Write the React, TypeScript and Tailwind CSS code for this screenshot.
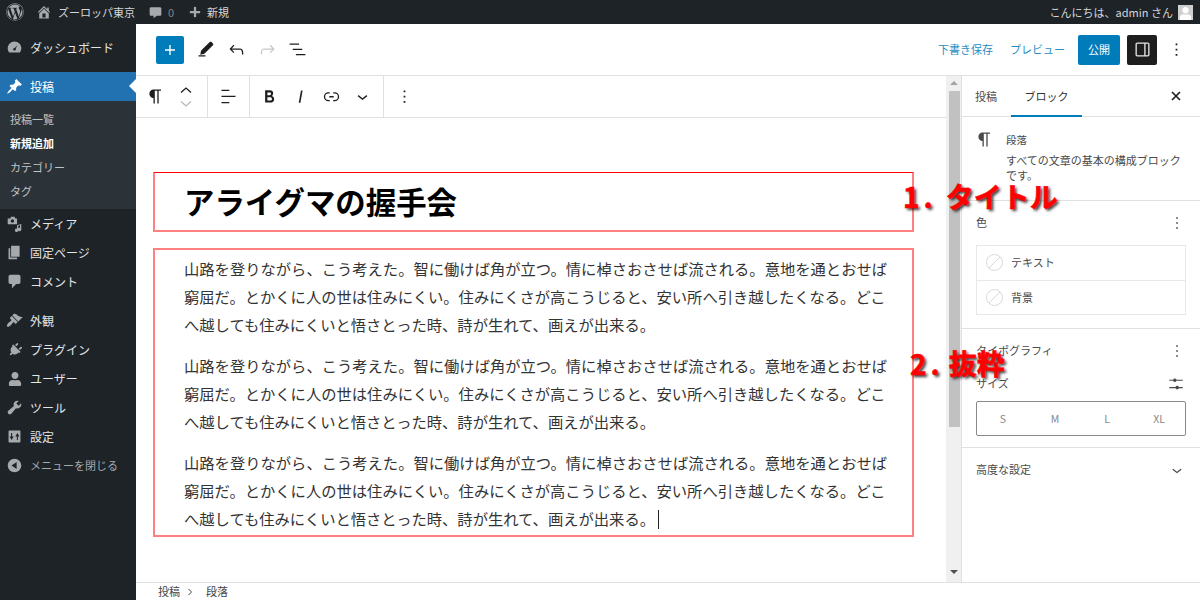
import React from "react";
import { FaWordpress, FaPlus, FaPlug, FaUser } from "react-icons/fa";

const G = ({ d, size = 24, className = "" }: { d: string; size?: number; className?: string }) => (
  <svg viewBox="0 0 24 24" width={size} height={size} fill="currentColor" className={className}>
    <path d={d} />
  </svg>
);
const D = ({ d, children, size = 17 }: { d?: string; children?: React.ReactNode; size?: number }) => (
  <svg viewBox="0 0 20 20" width={size} height={size} fill="currentColor">
    {d && <path d={d} />}
    {children}
  </svg>
);

const ic = {
  plus: "M18 11.2h-5.2V6h-1.6v5.2H6v1.6h5.2V18h1.6v-5.2H18z",
  pencil: "M4 20h8v-1.5H4zm14.9-16.5c-.6-.6-1.5-.6-2.1 0L7.6 12.7c-.7.7-1 1.6-1.1 2.6l-.5 2.7 2.7-.5c1-.1 1.9-.5 2.6-1.1l9.2-9.2c.6-.6.6-1.5 0-2.1z",
  undo: "M18.3 11.7c-.6-.6-1.4-.9-2.3-.9H6.7l2.9-3.3-1.1-1-4.5 5L8.5 16l1-1-2.7-2.7H16c.5 0 .9.2 1.3.5 1 1 1 3.4 1 4.5v.3h1.5v-.2c0-1.5 0-4.3-1.5-5.7z",
  redo: "M15.6 6.5l-1.1 1 2.9 3.3H8c-.9 0-1.7.3-2.3.9-1.4 1.5-1.4 4.2-1.4 5.6v.2h1.5v-.3c0-1.1 0-3.5 1-4.5.3-.3.7-.5 1.3-.5h9.2L14.5 15l1.1 1.1 4.6-4.6-4.6-5z",
  list: "M13.8 5.2H3v1.5h10.8V5.2zm-3.6 12v1.5H21v-1.5H10.2zm7.2-6H6.6v1.5h10.8v-1.5z",
  para: "M18.3 4H9.9v-.1l-.9.2c-2.3.4-4 2.4-4 4.8s1.7 4.4 4 4.8l.7.1V20h1.5V5.5h2.9V20h1.5V5.5h2.7V4z",
  align: "M4 19.8h8.9v-1.5H4v1.5zm8.9-15.6H4v1.5h8.9V4.2zm-8.9 7v1.5h16v-1.5H4z",
  bold: "M14.7 11.3c1-.6 1.5-1.6 1.5-3 0-2.3-1.3-3.4-4-3.4H7v14h5.8c1.4 0 2.5-.3 3.3-1 .8-.7 1.2-1.7 1.2-2.9.1-1.9-.8-3.1-2.6-3.7zm-5.1-4h2.3c.6 0 1.1.1 1.4.4.3.3.5.7.5 1.2s-.2 1-.5 1.2c-.3.3-.8.4-1.4.4H9.6V7.3zm4.6 9c-.4.3-1 .4-1.7.4H9.6v-3.9h2.9c.7 0 1.3.2 1.7.5.4.3.6.8.6 1.5s-.2 1.2-.6 1.5z",
  italic: "M12.5 5L10 19h1.9l2.5-14z",
  link: "M10 17.389H8.444A5.194 5.194 0 1 1 8.444 7H10v1.5H8.444a3.694 3.694 0 0 0 0 7.389H10v1.5ZM14 7h1.556a5.194 5.194 0 0 1 0 10.39H14v-1.5h1.556a3.694 3.694 0 0 0 0-7.39H14V7Zm-4.5 6h5v-1.5h-5V13Z",
  chevDown: "M17.5 11.6L12 16l-5.5-4.4.9-1.2L12 14l4.5-3.6 1 1.2z",
  dots: "M13 19h-2v-2h2v2zm0-6h-2v-2h2v2zm0-6h-2V5h2v2z",
  sidebar: "M18 4H6c-1.1 0-2 .9-2 2v12c0 1.1.9 2 2 2h12c1.1 0 2-.9 2-2V6c0-1.1-.9-2-2-2zM5.5 18V6c0-.3.2-.5.5-.5h8v13H6c-.3 0-.5-.2-.5-.5zm13 0c0 .3-.2.5-.5.5h-2.500v-13H18c.3 0 .5.2.5.5v12z",
  sliders: "M3 6.2h5.2a2.3 2.3 0 0 1 4.4 0H21v1.5h-8.4a2.3 2.3 0 0 1-4.4 0H3zm0 9.8h8.4a2.3 2.3 0 0 1 4.4 0H21v1.5h-5.2a2.3 2.3 0 0 1-4.4 0H3z",
};

const menuA = [
  { label: "メディア", icon: <D><path d="M2 4h3l1-2h4l1 2h2v7H2z" /><circle cx="7.5" cy="7" r="2" fill="#1d2327" /><path d="M13 12l5-1.500V17a2 2 0 1 1-1.500-1.900v-3.200L14.500 12.600V18a2 2 0 1 1-1.500-1.900z" /></D> },
  { label: "固定ページ", icon: <D d="M6 15V2h10v13H6zm-1 1h8v2H3V5h2v11z" /> },
  { label: "コメント", icon: <D d="M5 2h10c1.100 0 2 .9 2 2v7c0 1.100-.9 2-2 2h-3l-5 5v-5H5c-1.100 0-2-.9-2-2V4c0-1.100.9-2 2-2z" /> },
];
const menuB = [
  { label: "外観", icon: <D d="M14.480 11.060L7.410 3.990l1.500-1.500c.5-.56 2.300-.47 3.510.32 1.210.8 1.430 1.280 2.910 2.100 1.180.64 2.450 1.260 4.450.85zm-.71.71L6.700 4.700 4.930 6.470c-.39.39-.39 1.020 0 1.410l1.060 1.060c.39.39.39 1.030 0 1.420-.6.6-1.430 1.110-2.210 1.690-.35.26-.7.53-1.010.84C1.430 14.230.4 16.080 1.400 17.070c.99 1 2.840-.03 4.180-1.360.31-.31.58-.66.84-1.010.58-.78 1.090-1.610 1.690-2.210.39-.39 1.030-.39 1.420 0l1.060 1.060c.39.39 1.020.39 1.410 0z" /> },
  { label: "プラグイン", icon: <FaPlug size={14} className="rotate-45" /> },
  { label: "ユーザー", icon: <FaUser size={14} /> },
  { label: "ツール", icon: <D d="M16.680 9.770c-1.340 1.340-3.300 1.670-4.950.99l-5.410 6.520c-.99.99-2.590.99-3.570 0-.99-.98-.99-2.580 0-3.570l6.520-5.420c-.68-1.650-.35-3.610.99-4.950 1.280-1.280 3.120-1.620 4.720-1.060l-2.890 2.890 2.820 2.820 2.860-2.870c.53 1.580.18 3.390-1.090 4.650z" /> },
  { label: "設定", icon: <D><rect x="3" y="3" width="14" height="14" rx="1" /><path d="M6 6h1.200v4H9l-2.400 4-2.400-4H6zM12.800 14h1.200v-4h1.800l-2.400-4-2.400 4h1.800z" fill="#1d2327" /></D> },
];

const MenuRow = ({ label, icon }: { label: string; icon: React.ReactNode }) => (
  <div className="flex h-[29px] items-center text-[12px] text-[#e4e5e6]">
    <span className="flex w-[30px] shrink-0 justify-center pr-[1px] text-[#a7aaad]">{icon}</span>
    <span>{label}</span>
  </div>
);

const body = (
  <>
    山路を登りながら、こう考えた。智に働けば角が立つ。情に棹さおさせば流される。意地を通とおせば<br />
    窮屈だ。とかくに人の世は住みにくい。住みにくさが高こうじると、安い所へ引き越したくなる。どこ<br />
    へ越しても住みにくいと悟さとった時、詩が生れて、画えが出来る。
  </>
);

const ToolBtn = ({ d, className = "" }: { d: string; className?: string }) => (
  <span className={`flex w-[31px] justify-center ${className}`}><G d={d} size={21} /></span>
);

const NoColor = () => (
  <svg width="17" height="17" viewBox="0 0 17 17" className="shrink-0">
    <circle cx="8.5" cy="8.5" r="8" fill="none" stroke="#d8d8d8" />
    <path d="M3 14L14 3" stroke="#d8d8d8" />
  </svg>
);

export default function App() {
  return (
    <div className="relative flex h-[600px] w-[1200px] flex-col overflow-hidden bg-white font-['Noto_Sans_CJK_JP','Noto_Sans',sans-serif] text-[#1e1e1e]">
      {/* admin bar */}
      <div className="flex h-[24px] shrink-0 items-center bg-[#1d2327] text-[11px] text-[#d5d6d7]">
        <span className="ml-[6px] text-[#a7aaad]"><FaWordpress size={18} /></span>
        <span className="ml-[12px] text-[#a7aaad]"><D size={16} d="M16 8.500l1.530 1.530-1.060 1.060L10 4.620l-6.470 6.470-1.060-1.060L10 2.500l4 4v-2h2v4zm-6-2.460l6 5.990V18H4v-5.970zM12 17v-5H8v5h4z" /></span>
        <span className="ml-[6px]">ズーロッパ東京</span>
        <span className="ml-[14px] text-[#a7aaad]"><svg width="13" height="13" viewBox="0 0 20 20" fill="currentColor"><path d="M3 2h14c1 0 2 1 2 2v9c0 1-1 2-2 2h-5l-5 4v-4H3c-1 0-2-1-2-2V4c0-1 1-2 2-2z" /></svg></span>
        <span className="ml-[6px] text-[#80858a]">0</span>
        <span className="ml-[15px] text-[#a7aaad]"><FaPlus size={12} /></span>
        <span className="ml-[6px]">新規</span>
        <span className="ml-auto">こんにちは、admin さん</span>
        <span className="ml-[5px] mr-[7px] flex h-[15px] w-[15px] items-end justify-center overflow-hidden bg-[#cfcfcf] text-white"><FaUser size={13} /></span>
      </div>

      <div className="flex min-h-0 flex-1">
        {/* sidebar */}
        <div className="w-[136px] shrink-0 bg-[#1d2327]">
          <div className="pb-[10px] pt-[9px]">
            <MenuRow label="ダッシュボード" icon={<D><path d="M3.760 16h12.480c1.100-1.370 1.760-3.110 1.760-5 0-4.420-3.580-8-8-8s-8 3.580-8 8c0 1.890.66 3.630 1.760 5z" /><path d="M10 11l3.500-4-2.500 5z" fill="#1d2327" /><circle cx="10" cy="12" r="1.500" fill="#1d2327" /></D>} />
          </div>
          <div className="relative flex h-[29px] items-center bg-[#2271b1] text-[12px] text-white">
            <span className="flex w-[30px] shrink-0 justify-center pr-[1px]"><D d="M10.440 3.020l1.820-1.820 6.360 6.350-1.830 1.820c-1.050-.68-2.480-.57-3.410.36l-.75.75c-.92.93-1.040 2.350-.35 3.410l-1.830 1.820-2.410-2.410-2.800 2.790c-.42.42-3.380 2.710-3.800 2.290s1.860-3.390 2.280-3.810l2.790-2.790L4.100 9.360l1.830-1.820c1.050.69 2.480.57 3.400-.36l.75-.75c.93-.92 1.040-2.350.36-3.410z" /></span>
            <span>投稿</span>
            <span className="absolute right-0 top-[7px] h-0 w-0 border-y-[7px] border-r-[7px] border-y-transparent border-r-white" />
          </div>
          <div className="bg-[#2c3338] pb-[6px] pl-[10px] pt-[6px] text-[11px] text-[#c3c4c7]">
            <div className="flex h-[24px] items-center">投稿一覧</div>
            <div className="flex h-[24px] items-center font-bold text-white">新規追加</div>
            <div className="flex h-[24px] items-center">カテゴリー</div>
            <div className="flex h-[24px] items-center">タグ</div>
          </div>
          {menuA.map((m) => <MenuRow key={m.label} {...m} />)}
          <div className="h-[10px]" />
          {menuB.map((m) => <MenuRow key={m.label} {...m} />)}
          <div className="flex h-[29px] items-center text-[11px] text-[#a7aaad]">
            <span className="flex w-[30px] shrink-0 justify-center pr-[1px]"><D><circle cx="10" cy="10" r="8" /><path d="M12.500 6v8L6.500 10z" fill="#1d2327" /></D></span>
            <span>メニューを閉じる</span>
          </div>
        </div>

        {/* main */}
        <div className="flex min-w-0 flex-1 flex-col bg-white">
          {/* header */}
          <div className="flex h-[52px] shrink-0 items-center border-b border-[#e0e0e0]">
            <span className="ml-[20px] flex h-[28px] w-[28px] items-center justify-center rounded-[2px] bg-[#007cba] text-white"><G d={ic.plus} size={20} /></span>
            <span className="ml-[6px] flex items-center text-[#1e1e1e]">
              <ToolBtn d={ic.pencil} />
              <ToolBtn d={ic.undo} />
              <ToolBtn d={ic.redo} className="text-[#c8c8c8]" />
              <span className="-ml-[1px]"><ToolBtn d={ic.list} /></span>
            </span>
            <span className="ml-auto text-[11px] text-[#2a8cc0]">下書き保存</span>
            <span className="ml-[17px] text-[11px] text-[#2a8cc0]">プレビュー</span>
            <span className="ml-[13px] flex h-[30px] w-[42px] items-center justify-center rounded-[2px] bg-[#007cba] text-[11px] text-white">公開</span>
            <span className="ml-[7px] flex h-[30px] w-[30px] items-center justify-center rounded-[2px] bg-[#1e1e1e] text-[#e8e8e8]"><G d={ic.sidebar} size={21} /></span>
            <span className="ml-[8px] mr-[13px] flex w-[22px] justify-center"><G d={ic.dots} size={21} /></span>
          </div>

          <div className="flex min-h-0 flex-1">
            {/* editor */}
            <div className="flex min-w-0 flex-1 flex-col">
              <div className="flex h-[42px] shrink-0 items-center border-b border-[#e0e0e0]">
                <div className="flex h-full w-[72px] items-center border-r border-[#e0e0e0]">
                  <span className="ml-[9px]"><G d={ic.para} size={21} /></span>
                  <span className="ml-[13px] flex flex-col items-center">
                    <svg width="14" height="8" viewBox="0 0 14 8" fill="none" stroke="#1e1e1e" strokeWidth="1.3"><path d="M2 6.500L7 2l5 4.500" /></svg>
                    <svg width="14" height="8" viewBox="0 0 14 8" fill="none" stroke="#b8b8b8" strokeWidth="1.3" className="mt-[6px]"><path d="M2 1.500L7 6l5-4.500" /></svg>
                  </span>
                </div>
                <div className="flex h-full w-[42px] items-center justify-center border-r border-[#e0e0e0]"><G d={ic.align} size={21} /></div>
                <div className="flex h-full w-[134px] items-center border-r border-[#e0e0e0] pl-[4px]">
                  <ToolBtn d={ic.bold} />
                  <ToolBtn d={ic.italic} />
                  <ToolBtn d={ic.link} />
                  <ToolBtn d={ic.chevDown} />
                </div>
                <span className="ml-[10px]"><G d={ic.dots} size={21} /></span>
              </div>

              <div className="min-h-0 flex-1 pl-[17px] pr-[32px] pt-[54px]">
                <div className="flex h-[60px] items-center border-x-2 border-b-2 border-t border-x-[#ff8080] border-b-[#ff8080] border-t-[#ff0000] pl-[29px]">
                  <h1 className="text-[30.400px] font-bold leading-none text-black">アライグマの握手会</h1>
                </div>
                <div className="mt-[16px] h-[289px] border-2 border-[#ff8080] pl-[29px] pt-[4px] text-[15.300px] leading-[28px] text-[#333]">
                  <p className="whitespace-nowrap">{body}</p>
                  <p className="mt-[13px] whitespace-nowrap">{body}</p>
                  <p className="mt-[13px] whitespace-nowrap">
                    {body}
                    <span className="ml-[3px] inline-block h-[19px] w-px bg-[#222] align-[-4px]" />
                  </p>
                </div>
              </div>
            </div>

            {/* scrollbar */}
            <div className="flex w-[15px] shrink-0 flex-col items-center bg-[#f0f0f0] pl-[1px] pt-[5px]">
              <span className="h-0 w-0 border-x-[4px] border-b-[4px] border-x-transparent border-b-[#a3a3a3]" />
              <span className="mt-[6px] h-[336px] w-[11px] bg-[#c1c1c1]" />
              <span className="mt-[143px] h-0 w-0 border-x-[4px] border-t-[4px] border-x-transparent border-t-[#505050]" />
            </div>

            {/* panel */}
            <div className="w-[239px] shrink-0 border-l border-[#e0e0e0] text-[11px] text-[#4a4a4a]">
              <div className="flex h-[41px] items-center border-b border-[#e0e0e0]">
                <span className="ml-[13px]">投稿</span>
                <span className="relative ml-[14px] flex h-full w-[71px] items-center justify-center text-[#333]">
                  ブロック
                  <span className="absolute inset-x-0 bottom-[-1px] h-[2px] bg-[#007cba]" />
                </span>
                <span className="ml-auto mr-[19px]">
                  <svg width="10" height="10" viewBox="0 0 10 10" stroke="#1e1e1e" strokeWidth="1.7"><path d="M1 1l8 8M9 1l-8 8" /></svg>
                </span>
              </div>
              <div className="flex h-[84px] border-b border-[#e0e0e0] pl-[13px] pt-[13px]">
                <span className="-ml-[1px] -mt-[1px] w-[32px] shrink-0"><G d={ic.para} size={21} /></span>
                <div className="leading-[15px]">
                  <div className="mt-[2px] text-[10.500px]">段落</div>
                  <div className="mt-[6px] w-[180px]">すべての文章の基本の構成ブロックです。</div>
                </div>
              </div>
              <div className="h-[128px] border-b border-[#e0e0e0] px-[14px]">
                <div className="flex h-[44px] items-center justify-between">
                  <span className="-mt-[2px]">色</span>
                  <span className="-mr-[1px]"><G d={ic.dots} size={20} /></span>
                </div>
                <div className="border border-[#e8e8e8]">
                  <div className="flex h-[34px] items-center gap-[8px] pl-[9px] pb-[1px]"><NoColor />テキスト</div>
                  <div className="border-t border-[#e8e8e8]" />
                  <div className="flex h-[33px] items-center gap-[8px] pl-[9px] pb-[1px]"><NoColor />背景</div>
                </div>
              </div>
              <div className="h-[119px] border-b border-[#e0e0e0] px-[14px]">
                <div className="flex h-[43px] items-center justify-between">
                  <span>タイポグラフィ</span>
                  <span className="-mr-[1px]"><G d={ic.dots} size={20} /></span>
                </div>
                <div className="flex h-[23px] items-center justify-between">
                  <span>サイズ</span>
                  <span className="mr-[1px]"><G d={ic.sliders} size={18} /></span>
                </div>
                <div className="mt-[6px] grid h-[35px] grid-cols-4 rounded-[2px] border border-[#8a8a8a] text-[10.500px] text-[#888]">
                  {["S", "M", "L", "XL"].map((s) => <span key={s} className="flex items-center justify-center">{s}</span>)}
                </div>
              </div>
              <div className="flex h-[43px] items-center justify-between px-[14px]">
                <span>高度な設定</span>
                <span className="-mr-[1px]"><G d={ic.chevDown} size={20} /></span>
              </div>
            </div>
          </div>

          {/* footer */}
          <div className="flex h-[18px] shrink-0 items-center border-t border-[#e0e0e0] pl-[22px] text-[11px] text-[#444]">
            <span>投稿</span>
            <svg width="8" height="8" viewBox="0 0 8 8" fill="none" stroke="#444" className="mx-[6px]"><path d="M2.500 1l3 3-3 3" /></svg>
            <span className="ml-[6px]">段落</span>
          </div>
        </div>
      </div>

      {/* annotations */}
      <span className="absolute left-[903px] top-[176px] whitespace-nowrap text-[28px] font-bold leading-[40px] text-[#ff0000] [-webkit-text-stroke:0.6px_#ff0000] [text-shadow:2px_2px_3px_rgba(0,0,0,0.8)]">
        <span className="tracking-[4px]">1.</span>
        <span className="ml-[9px]">タイトル</span>
      </span>
      <span className="absolute left-[910px] top-[343px] whitespace-nowrap text-[28px] font-bold leading-[40px] text-[#ff0000] [-webkit-text-stroke:0.6px_#ff0000] [text-shadow:2px_2px_3px_rgba(0,0,0,0.8)]">
        <span className="tracking-[4px]">2.</span>
        <span className="ml-[5px]">抜粋</span>
      </span>
    </div>
  );
}
